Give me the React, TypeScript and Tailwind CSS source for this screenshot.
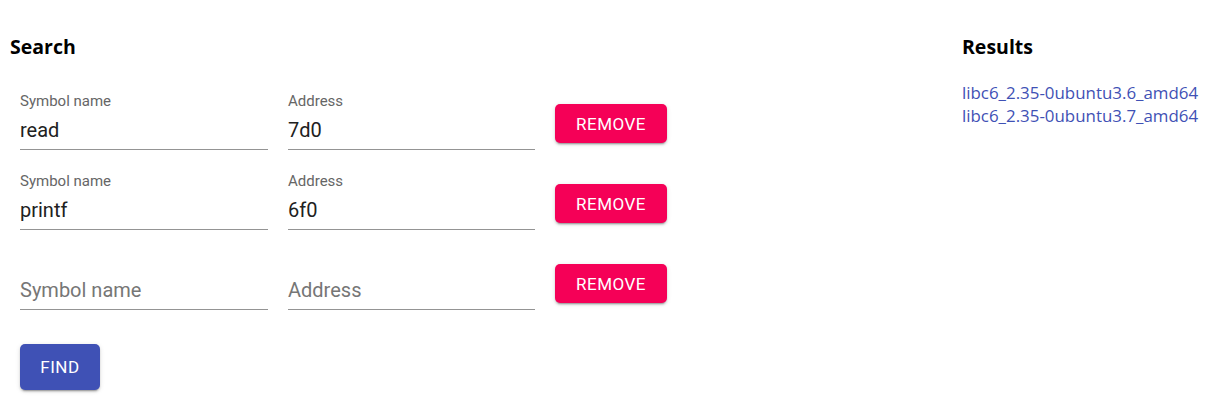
import React from "react";

const shadow =
  "shadow-[0px_3px_1px_-2px_rgba(0,0,0,0.2),0px_2px_2px_0px_rgba(0,0,0,0.14),0px_1px_5px_0px_rgba(0,0,0,0.12)]";

function Field({ label, value, width }: { label: string; value: string; width: string }) {
  return (
    <div className={`${width} flex flex-col border-b border-[#949494] pb-[7px]`}>
      <div className="h-[18px] text-[15px] leading-[18px] text-[#666666]">{value ? label : ""}</div>
      <div className={`mt-[8px] text-[20px] leading-[24px] ${value ? "text-[#212121]" : "text-[#767676]"}`}>
        {value || label}
      </div>
    </div>
  );
}

function Row({ sym, addr }: { sym: string; addr: string }) {
  return (
    <div className="flex items-start gap-[20px]">
      <Field label="Symbol name" value={sym} width="w-[248px]" />
      <Field label="Address" value={addr} width="w-[247px]" />
      <button
        className={`mt-[12px] flex h-[39px] w-[112px] items-center justify-center rounded-[5px] bg-[#f50057] pt-[2px] text-[17px] font-normal uppercase tracking-[0.5px] text-white ${shadow}`}
      >
        Remove
      </button>
    </div>
  );
}

export default function App() {
  return (
    <div
      className="flex w-[1209px] h-[409px] bg-white pt-[33px] pl-[10px]"
      style={{ fontFamily: "Roboto, 'Liberation Sans', sans-serif" }}
    >
      <div className="flex-1 flex flex-col">
        <h2 className="text-[19.5px] leading-[28px] font-bold text-black" style={{ fontFamily: "'Open Sans', sans-serif" }}>
          Search
        </h2>
        <div className="mt-[31px] pl-[10px] flex flex-col gap-[22px]">
          <Row sym="read" addr="7d0" />
          <Row sym="printf" addr="6f0" />
          <Row sym="" addr="" />
        </div>
        <div className="pl-[10px] mt-[34px]">
          <button
            className={`flex h-[46px] w-[80px] items-center justify-center rounded-[5px] bg-[#3f51b5] pt-[2px] text-[17px] font-normal uppercase tracking-[0.5px] text-white ${shadow}`}
          >
            Find
          </button>
        </div>
      </div>
      <div className="w-[247px] flex flex-col" style={{ fontFamily: "'Open Sans', sans-serif" }}>
        <h2 className="text-[19.5px] leading-[28px] font-bold text-black">Results</h2>
        <div className="mt-[20px] flex flex-col text-[16.9px] leading-[23px] text-[#3f51b5]">
          <a href="#">libc6_2.35-0ubuntu3.6_amd64</a>
          <a href="#">libc6_2.35-0ubuntu3.7_amd64</a>
        </div>
      </div>
    </div>
  );
}
